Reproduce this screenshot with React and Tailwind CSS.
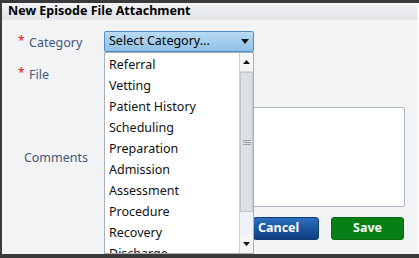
import React from "react";

const items = [
  "Referral",
  "Vetting",
  "Patient History",
  "Scheduling",
  "Preparation",
  "Admission",
  "Assessment",
  "Procedure",
  "Recovery",
  "Discharge",
];

function Label({ req, children, shift }) {
  return (
    <div className={"w-[86px] flex items-center pl-[16px] text-[#44587a] relative " + shift}>
      <span className="w-[11px] text-[#e0141e] text-[12px] leading-none relative top-[-3px]">
        {req ? "*" : ""}
      </span>
      <span>{children}</span>
    </div>
  );
}

export default function App() {
  return (
    <div
      className="w-[419px] h-[258px] relative overflow-hidden bg-[#3a3a3a] pt-[3px] pl-[2px] pb-[4px] text-[12.5px]"
      style={{ fontFamily: '"Noto Sans", "Liberation Sans", sans-serif' }}
    >
      <div className="h-full bg-[#f1f3f5] flex flex-col border-r-[2px] border-[#fafafa]">
        <div className="h-[17px] bg-gradient-to-b from-[#f3f4f6] to-[#e1e3e6] border-b border-[#e9ebee] flex items-center pl-[6px] pt-[1px] font-bold text-[12.5px] text-black leading-none">
          New Episode File Attachment
        </div>
        <div className="flex flex-col pt-[11px]">
          <div className="flex h-[21px]">
            <Label req shift="top-[2px]">Category</Label>
            <div className="w-[150px] h-[21px] ml-[16px] rounded-[2px] border border-[#4e8fc8] bg-gradient-to-b from-[#b8dbf3] to-[#8fc1e6] flex items-center pl-[4px] pr-[4px] text-black justify-between">
              <span>Select Category...</span>
              <svg width="8" height="5" viewBox="0 0 8 5">
                <path d="M0 0H8L4 5Z" fill="#111" />
              </svg>
            </div>
          </div>
          <div className="flex h-[21px] mt-[11px]">
            <Label req shift="top-[2px]">File</Label>
            <div className="ml-[16px] w-[150px] h-[21px] bg-white border border-[#aab4c0]" />
          </div>
          <div className="flex h-[100px] mt-[23px]">
            <Label shift="top-[1px]">Comments</Label>
            <div className="ml-[16px] w-[301px] h-[100px] bg-white border border-[#aeb6c1] rounded-[2px]" />
          </div>
          <div className="flex mt-[10px] pl-[251px] gap-[12px]">
            <div className="w-[66px] h-[23px] rounded-[3px] bg-gradient-to-b from-[#2a6fc0] to-[#0f3f80] border border-[#123d73] text-white font-bold text-[12.5px] flex items-center pl-[4px]">
              Cancel
            </div>
            <div className="w-[73px] h-[23px] rounded-[3px] bg-[#068016] border border-[#0a6a14] text-white font-bold text-[12.5px] flex items-center justify-center">
              Save
            </div>
          </div>
        </div>
      </div>

      <div className="absolute left-[104px] top-[52px] w-[150px] h-[202px] bg-white border border-[#a7b0bb] flex">
        <div className="flex-1 flex flex-col pt-[2px] pl-[4px] overflow-hidden text-[#111]">
          {items.map((t) => (
            <div key={t} className="h-[21px] shrink-0 flex items-center">
              {t}
            </div>
          ))}
        </div>
        <div className="w-[14px] flex flex-col border-l border-[#c9ced4] bg-[#eef1f4]">
          <div className="h-[19px] flex items-center justify-center bg-[#f4f6f8] border-b border-[#d5d9de]">
            <svg width="7" height="4" viewBox="0 0 7 4">
              <path d="M0 4H7L3.5 0Z" fill="#111" />
            </svg>
          </div>
          <div className="h-[140px] bg-[#dcdfe3] border border-[#c2c7cd] flex items-center justify-center">
            <div className="w-[8px] flex flex-col gap-[1px]">
              <div className="h-[1px] bg-[#9aa0a8]" />
              <div className="h-[1px] bg-[#9aa0a8]" />
              <div className="h-[1px] bg-[#9aa0a8]" />
            </div>
          </div>
          <div className="flex-1 bg-[#eef2f6]" />
          <div className="h-[19px] flex items-center justify-center bg-[#f4f6f8]">
            <svg width="7" height="4" viewBox="0 0 7 4">
              <path d="M0 0H7L3.5 4Z" fill="#111" />
            </svg>
          </div>
        </div>
      </div>
    </div>
  );
}
